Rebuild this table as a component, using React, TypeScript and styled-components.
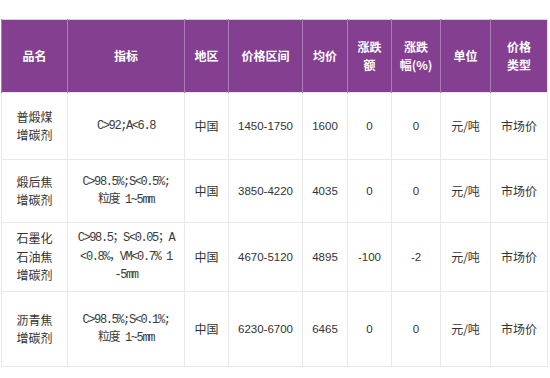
import styled, { createGlobalStyle } from "styled-components";

const GlobalStyle = createGlobalStyle`
  html, body {
    margin: 0;
    padding: 0;
    background: #ffffff;
  }
  body {
    font-family: "Liberation Sans", "Noto Sans CJK SC", sans-serif;
  }
`;

const Page = styled.div`
  width: 550px;
  height: 378px;
  padding: 19px 0 0 1px;
  box-sizing: border-box;
  overflow: hidden;
`;

const PriceTable = styled.table`
  width: 546px;
  table-layout: fixed;
  border-collapse: collapse;
  border-top: 1px solid #d4d4d4;
  border-bottom: 1px solid #e4e4e4;
  border-right: 1px solid #e4e4e4;
  font-size: 12px;
  color: #333333;
`;

const HeadCell = styled.th`
  background: #843f91;
  color: #ffffff;
  font-weight: bold;
  font-size: 12px;
  line-height: 18px;
  text-align: center;
  vertical-align: middle;
  padding: 0 4px;
  border-left: 1px solid #a77fb1;
  font-family: "Noto Sans CJK SC", "Liberation Sans", sans-serif;
`;

const Row = styled.tr<{ $h: number }>`
  height: ${({ $h }) => $h}px;
`;

const Cell = styled.td`
  text-align: center;
  vertical-align: middle;
  line-height: 18.5px;
  padding: 0 4px;
  border: 1px solid #e8e8e8;
  font-family: "Liberation Sans", "Noto Sans CJK SC", sans-serif;
  font-size: 11.5px;
`;

const NameCell = styled(Cell)`
  font-family: "Noto Sans CJK SC", sans-serif;
  font-size: 12px;
`;

const SpecCell = styled(Cell)`
  font-family: "Liberation Mono", "Noto Sans CJK SC", monospace;
  font-size: 12px;
  letter-spacing: -1.4px;
  color: #3a3a3a;
  padding: 0 2px;
`;

const widths = [66, 117, 44, 74, 45, 44, 49, 50, 57];

const headers: React.ReactNode[] = [
  "品名",
  "指标",
  "地区",
  "价格区间",
  "均价",
  <>涨跌<br />额</>,
  <>涨跌<br />幅(%)</>,
  "单位",
  <>价格<br />类型</>,
];

type Item = {
  name: string[];
  spec: string[];
  range: string;
  avg: string;
  diff: string;
  pct: string;
  h: number;
};

const items: Item[] = [
  { name: ["普煅煤", "增碳剂"], spec: ["C>92;A<6.8"], range: "1450-1750", avg: "1600", diff: "0", pct: "0", h: 67 },
  { name: ["煅后焦", "增碳剂"], spec: ["C>98.5%;S<0.5%;", "粒度 1~5mm"], range: "3850-4220", avg: "4035", diff: "0", pct: "0", h: 63 },
  { name: ["石墨化", "石油焦", "增碳剂"], spec: ["C>98.5；S<0.05；A", "<0.8%，VM<0.7% 1", "-5mm"], range: "4670-5120", avg: "4895", diff: "-100", pct: "-2", h: 69 },
  { name: ["沥青焦", "增碳剂"], spec: ["C>98.5%;S<0.1%;", "粒度 1~5mm"], range: "6230-6700", avg: "6465", diff: "0", pct: "0", h: 75 },
];

const lines = (parts: string[]) =>
  parts.map((p, i) => (
    <span key={i}>
      {i > 0 && <br />}
      {p}
    </span>
  ));

export default function App() {
  return (
    <Page>
      <GlobalStyle />
      <PriceTable>
        <colgroup>
          {widths.map((w, i) => (
            <col key={i} style={{ width: w }} />
          ))}
        </colgroup>
        <thead>
          <Row $h={73}>
            {headers.map((h, i) => (
              <HeadCell key={i}>{h}</HeadCell>
            ))}
          </Row>
        </thead>
        <tbody>
          {items.map((it, i) => (
            <Row $h={it.h} key={i}>
              <NameCell>{lines(it.name)}</NameCell>
              <SpecCell>{lines(it.spec)}</SpecCell>
              <NameCell>中国</NameCell>
              <Cell>{it.range}</Cell>
              <Cell>{it.avg}</Cell>
              <Cell>{it.diff}</Cell>
              <Cell>{it.pct}</Cell>
              <NameCell>元/吨</NameCell>
              <NameCell>市场价</NameCell>
            </Row>
          ))}
        </tbody>
      </PriceTable>
    </Page>
  );
}
